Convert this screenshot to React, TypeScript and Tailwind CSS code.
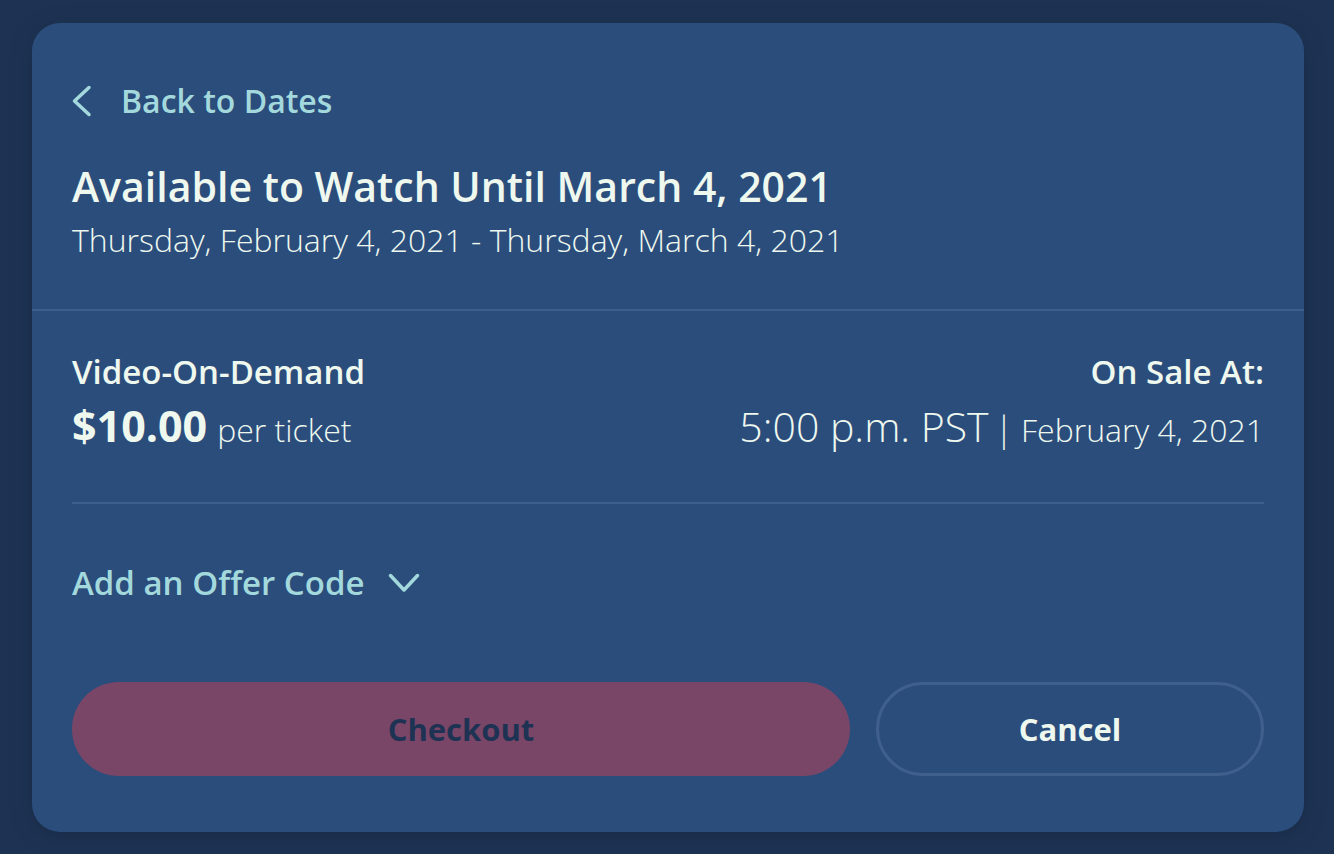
export default function App() {
  return (
    <div
      className="min-h-[854px] w-full bg-[#1e3354] pt-[23px] pl-[32px] pr-[30px]"
      style={{ fontFamily: "'Open Sans', Lato, sans-serif" }}
    >
      <div className="rounded-[28px] bg-[#2b4d7c] text-[#eef8ee] h-[809px] shadow-[0_4px_24px_rgba(0,0,0,0.18)]">
        {/* Header */}
        <div className="px-10 pt-[58px] pb-[49px]">
          <button className="flex h-[40px] items-center gap-[29px] text-[#a3d9dc]">
            <svg width="20" height="32" viewBox="0 0 20 32" fill="none" stroke="currentColor" strokeWidth="3.5" strokeLinecap="round" strokeLinejoin="round">
              <polyline points="17,2.5 2.5,16 17,29.5" />
            </svg>
            <span className="text-[32px] font-semibold leading-[40px]">Back to Dates</span>
          </button>
          <h1 className="mt-[40px] text-[41px] font-semibold leading-[50px]">
            Available to Watch Until March 4, 2021
          </h1>
          <p className="mt-[9px] text-[32px] font-light leading-[40px]">
            Thursday, February 4, 2021 - Thursday, March 4, 2021
          </p>
        </div>

        <div className="h-[2px] bg-[#3d5f8f]" />

        {/* Ticket info */}
        <div className="px-10">
          <div className="flex justify-between pt-[41px] pb-[47px]">
            <div>
              <div className="text-[33px] font-semibold leading-[40px]">Video-On-Demand</div>
              <div className="mt-[9px] flex items-baseline gap-[10px] leading-[50px]">
                <span className="text-[43px] font-bold">$10.00</span>
                <span className="text-[32px] font-light">per ticket</span>
              </div>
            </div>
            <div className="text-right">
              <div className="text-[33px] font-semibold leading-[40px]">On Sale At:</div>
              <div className="mt-[9px] flex items-baseline justify-end leading-[50px]">
                <span className="text-[41px] font-light">5:00 p.m. PST</span>
                <span className="ml-[6px] mr-[8px] text-[34px] font-light">|</span>
                <span className="text-[32px] font-light">February 4, 2021</span>
              </div>
            </div>
          </div>

          <div className="h-[2px] bg-[#3d5f8f]" />

          <button className="mt-[59px] flex h-[40px] items-center gap-[24px] text-[#a3d9dc]">
            <span className="text-[33px] font-semibold leading-[40px]">Add an Offer Code</span>
            <svg width="32" height="20" viewBox="0 0 32 20" fill="none" stroke="currentColor" strokeWidth="3.5" strokeLinecap="round" strokeLinejoin="round">
              <polyline points="2.5,2.5 16,17 29.5,2.5" />
            </svg>
          </button>

          <div className="mt-[79px] flex gap-[26px]">
            <button className="h-[94px] w-[778px] rounded-full bg-[#7a4667] text-[31px] font-bold text-[#1e3354]">
              Checkout
            </button>
            <button className="h-[94px] flex-1 rounded-full border-[3px] border-[#3f5f8c] text-[31px] font-bold text-[#eef8ee]">
              Cancel
            </button>
          </div>
        </div>
      </div>
    </div>
  );
}
